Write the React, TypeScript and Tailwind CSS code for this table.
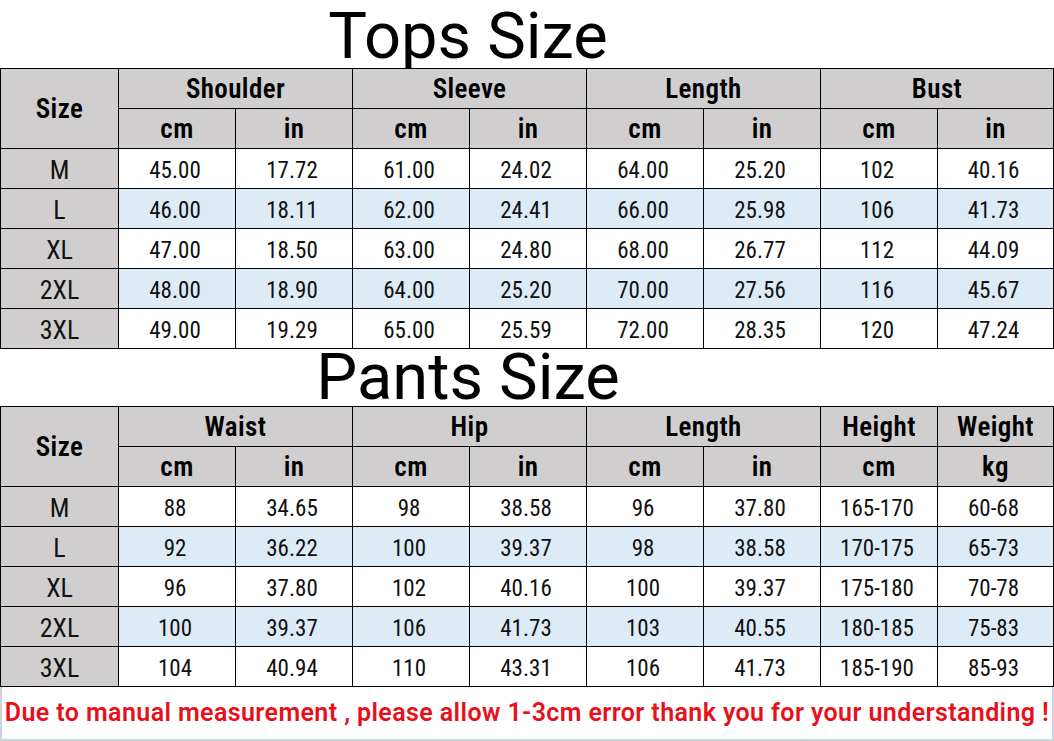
import { FC } from 'react';

const COND = { fontFamily: '"Roboto Condensed", "Roboto", sans-serif' };
const ROBOTO = { fontFamily: '"Roboto", "Liberation Sans", sans-serif' };

const sizes = ['M', 'L', 'XL', '2XL', '3XL'];

const topsRows = [
  ['45.00', '17.72', '61.00', '24.02', '64.00', '25.20', '102', '40.16'],
  ['46.00', '18.11', '62.00', '24.41', '66.00', '25.98', '106', '41.73'],
  ['47.00', '18.50', '63.00', '24.80', '68.00', '26.77', '112', '44.09'],
  ['48.00', '18.90', '64.00', '25.20', '70.00', '27.56', '116', '45.67'],
  ['49.00', '19.29', '65.00', '25.59', '72.00', '28.35', '120', '47.24'],
];

const pantsRows = [
  ['88', '34.65', '98', '38.58', '96', '37.80', '165-170', '60-68'],
  ['92', '36.22', '100', '39.37', '98', '38.58', '170-175', '65-73'],
  ['96', '37.80', '102', '40.16', '100', '39.37', '175-180', '70-78'],
  ['100', '39.37', '106', '41.73', '103', '40.55', '180-185', '75-83'],
  ['104', '40.94', '110', '43.31', '106', '41.73', '185-190', '85-93'],
];

interface IGroup {
  label: string;
  units: string[];
}

interface ISizeTableProps {
  groups: IGroup[];
  rows: string[][];
}

const headCell =
  'flex items-center justify-center pt-[2px] bg-[#d0cece] text-[27px] font-semibold tracking-[0.4px] text-black leading-none';

const SizeTable: FC<ISizeTableProps> = ({ groups, rows }) => (
  <div
    className="grid grid-cols-[117px_repeat(7,116px)_115px] grid-rows-[repeat(7,39px)] gap-px bg-black p-px"
    style={COND}
  >
    <div className={headCell + ' row-span-2'}>Size</div>
    {groups.map((g) => (
      <div key={g.label} className={g.units.length === 2 ? headCell + ' col-span-2' : headCell}>
        {g.label}
      </div>
    ))}
    {groups.map((g) =>
      g.units.map((u, i) => (
        <div key={g.label + i} className={headCell}>
          {u}
        </div>
      )),
    )}
    {rows.map((r, ri) => (
      <div key={ri} className="contents">
        <div className="flex items-center justify-center pt-[2px] bg-[#d0cece] text-[26px] text-[#111] leading-none">
          {sizes[ri]}
        </div>
        {r.map((v, ci) => (
          <div
            key={ci}
            className={
              (ri % 2 === 1 ? 'bg-[#ddebf7]' : 'bg-white') +
              ' flex items-center justify-center pt-[3px] pr-[4px] text-[23px] text-[#111] leading-none'
            }
          >
            {v}
          </div>
        ))}
      </div>
    ))}
  </div>
);

export default function App() {
  return (
    <div className="w-[1054px] h-[741px] bg-white overflow-hidden flex flex-col">
      <div className="h-[68px] shrink-0 pt-[4px]">
        <div className="w-[936px] text-center text-[65px] leading-[64px] font-normal text-black" style={ROBOTO}>
          Tops Size
        </div>
      </div>
      <SizeTable
        groups={[
          { label: 'Shoulder', units: ['cm', 'in'] },
          { label: 'Sleeve', units: ['cm', 'in'] },
          { label: 'Length', units: ['cm', 'in'] },
          { label: 'Bust', units: ['cm', 'in'] },
        ]}
        rows={topsRows}
      />
      <div className="h-[57px] shrink-0 pt-px">
        <div className="w-[936px] text-center text-[65px] leading-[55px] font-normal text-black" style={ROBOTO}>
          Pants Size
        </div>
      </div>
      <SizeTable
        groups={[
          { label: 'Waist', units: ['cm', 'in'] },
          { label: 'Hip', units: ['cm', 'in'] },
          { label: 'Length', units: ['cm', 'in'] },
          { label: 'Height', units: ['cm'] },
          { label: 'Weight', units: ['kg'] },
        ]}
        rows={pantsRows}
      />
      <div
        className="flex-1 flex items-center justify-center border-x-2 border-b-2 border-[#cdd3de] text-[25px] font-semibold tracking-[0.4px] text-[#e8101a]"
        style={ROBOTO}
      >
        Due to manual measurement , please allow 1-3cm error thank you for your understanding !
      </div>
    </div>
  );
}
